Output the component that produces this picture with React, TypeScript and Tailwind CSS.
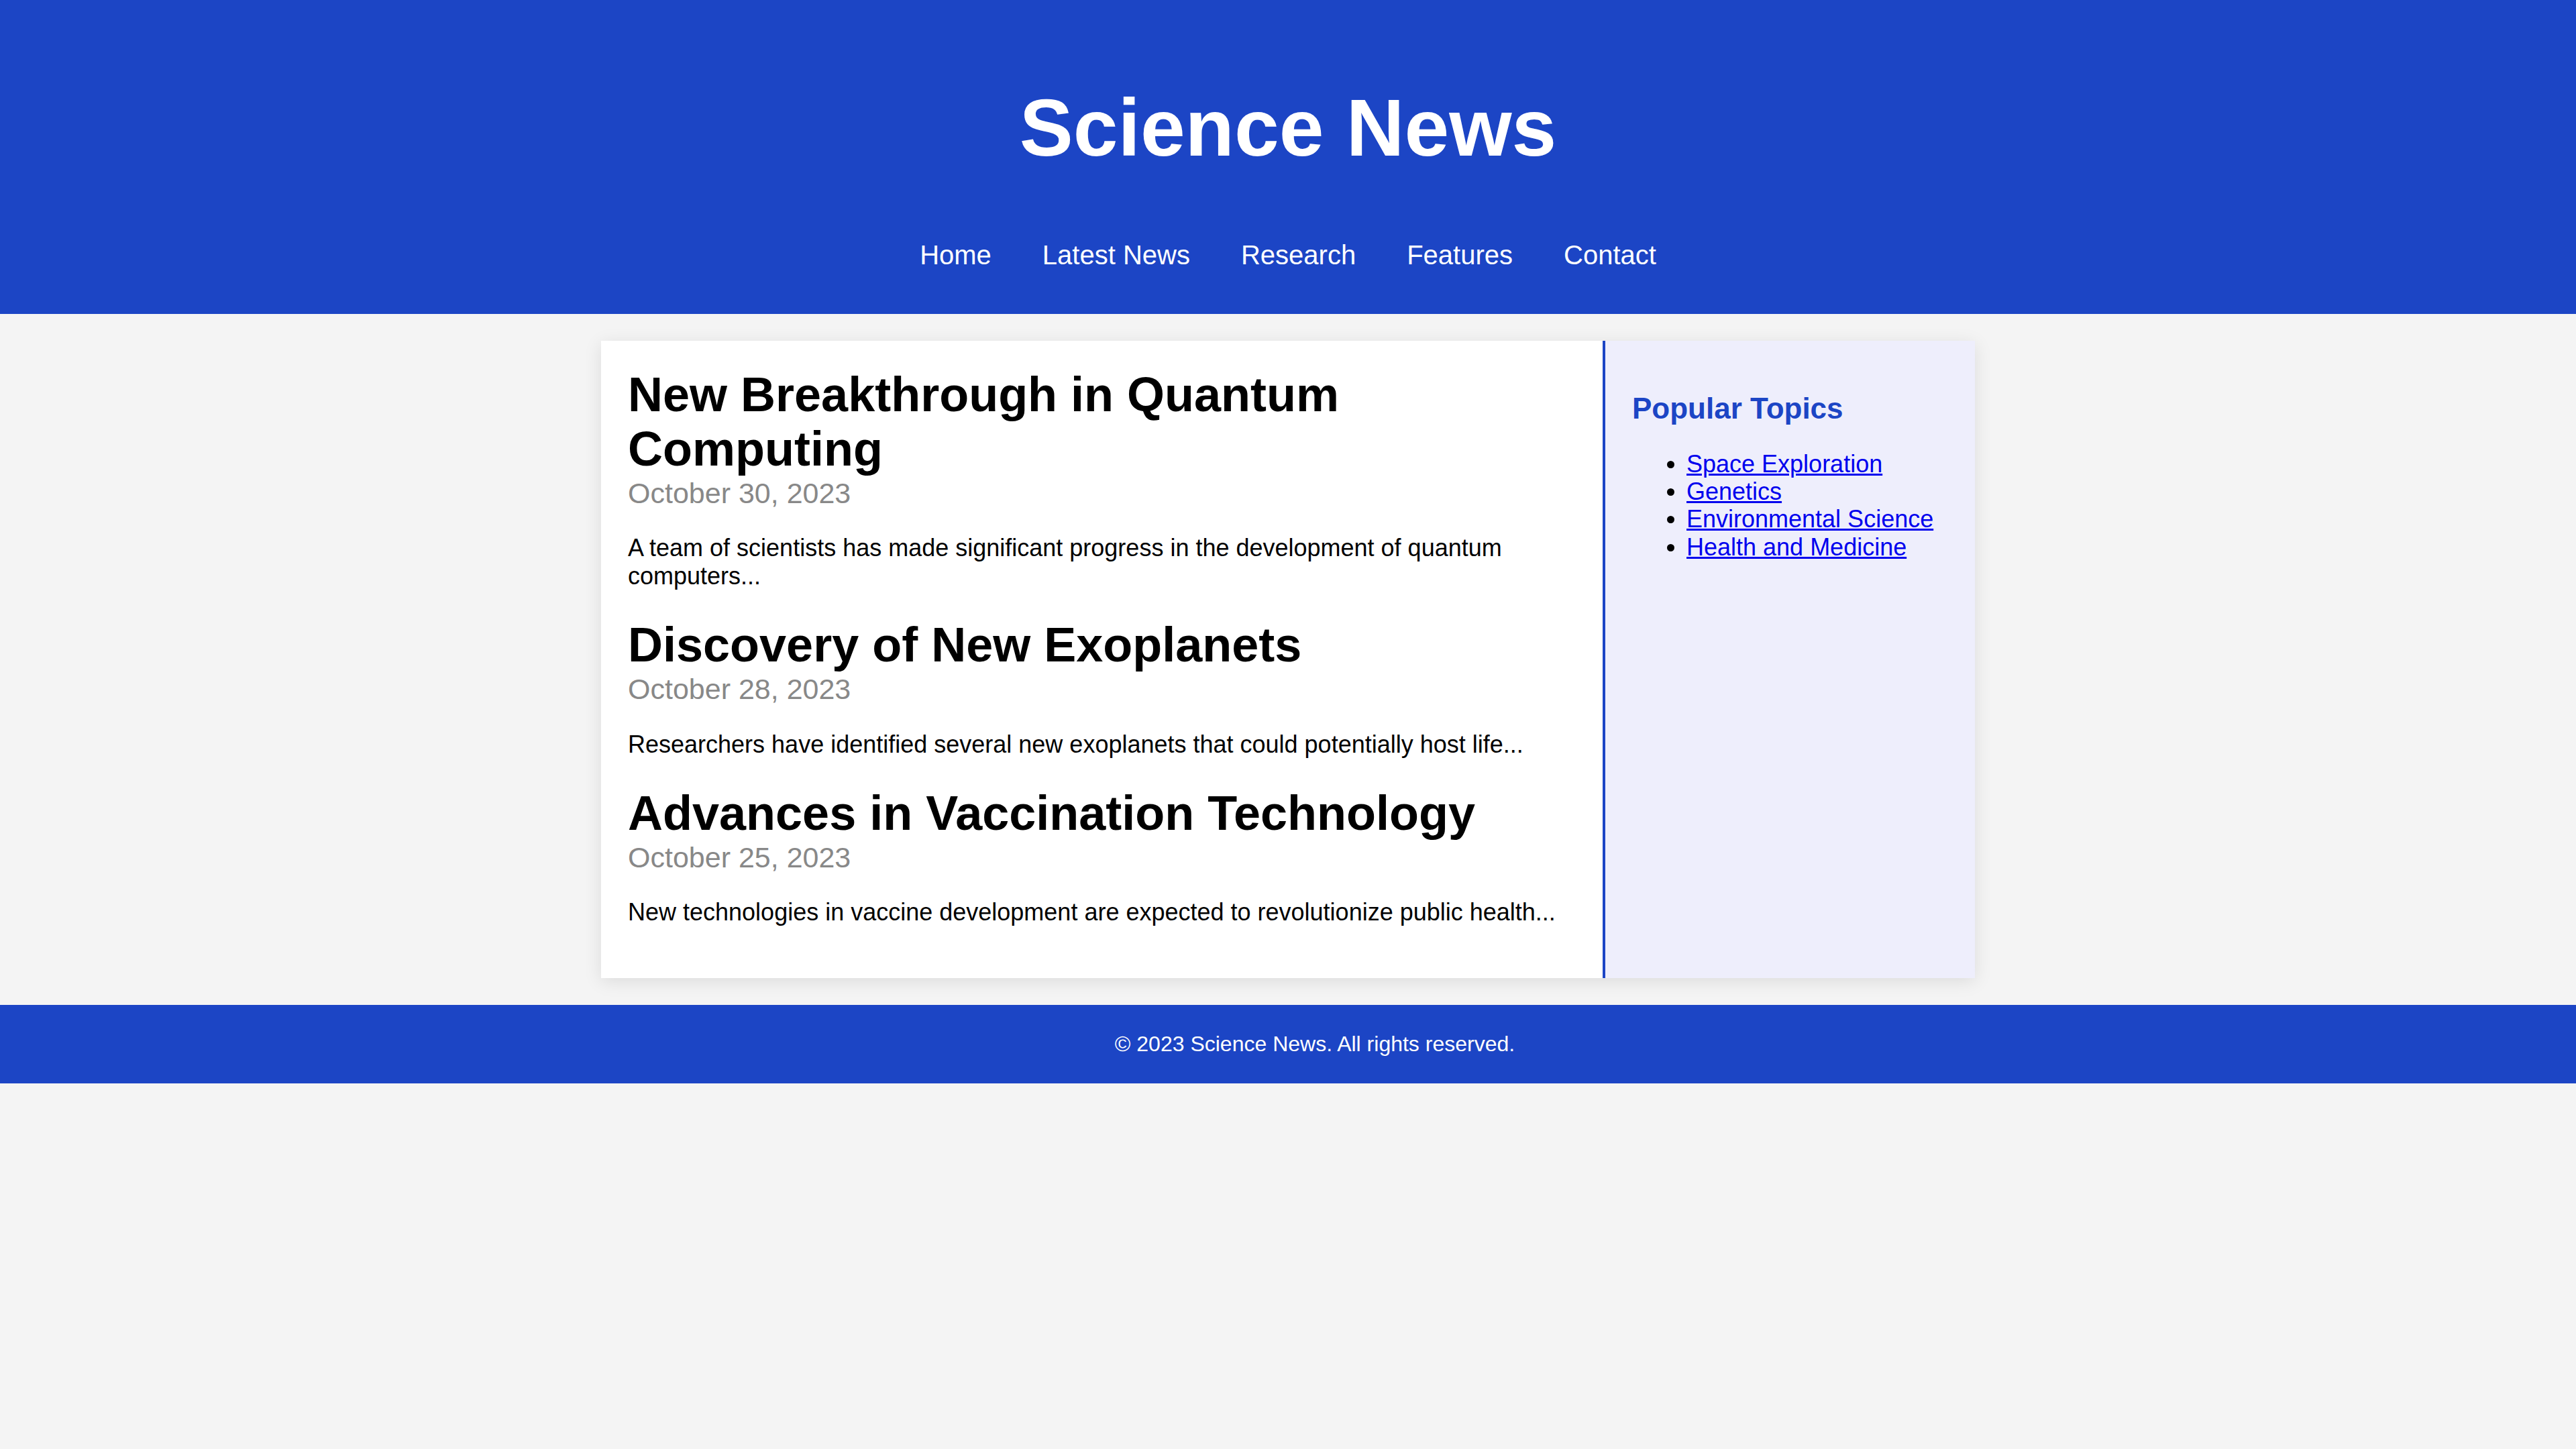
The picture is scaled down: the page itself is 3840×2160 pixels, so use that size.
const navItems = ["Home", "Latest News", "Research", "Features", "Contact"];

const articles = [
  {
    title: "New Breakthrough in Quantum Computing",
    date: "October 30, 2023",
    text: "A team of scientists has made significant progress in the development of quantum computers...",
  },
  {
    title: "Discovery of New Exoplanets",
    date: "October 28, 2023",
    text: "Researchers have identified several new exoplanets that could potentially host life...",
  },
  {
    title: "Advances in Vaccination Technology",
    date: "October 25, 2023",
    text: "New technologies in vaccine development are expected to revolutionize public health...",
  },
];

const topics = ["Space Exploration", "Genetics", "Environmental Science", "Health and Medicine"];

const App = () => {
  return (
    <div className="min-h-screen bg-[#f4f4f4] font-['Liberation_Sans',Arial,sans-serif] text-black">
      <header className="bg-[#1c45c5] text-white text-center pt-[40px] pb-[65px]">
        <h1 className="mt-[81px] text-[120px] leading-[138px] font-bold">Science News</h1>
        <nav className="mt-[98px] flex justify-center gap-[76px] text-[40px] leading-[46px]">
          {navItems.map((item) => (
            <a key={item} href="#" className="text-white">
              {item}
            </a>
          ))}
        </nav>
      </header>

      <main className="mt-[40px] w-[2048px] mx-auto flex bg-white shadow-[0_5px_25px_rgba(0,0,0,0.1)]">
        <section className="flex-1 px-[40px] pt-[40px] pb-[41px] flex flex-col gap-[6px]">
          {articles.map((a) => (
            <article key={a.title}>
              <h2 className="text-[72px] leading-[81px] font-bold">{a.title}</h2>
              <div className="mt-[1px] text-[43px] leading-[1.15] text-[#888888]">{a.date}</div>
              <p className="my-[36px] text-[36px] leading-[1.15]">{a.text}</p>
            </article>
          ))}
        </section>
        <aside className="w-[555px] border-l-4 border-[#1c45c5] bg-[#eeeefc] p-[40px]">
          <h3 className="mt-[36px] text-[44px] leading-[1.15] font-bold text-[#1c45c5]">Popular Topics</h3>
          <ul className="mt-[36px] pl-[81px] list-disc text-[36px] leading-[1.15]">
            {topics.map((t) => (
              <li key={t}>
                <a href="#" className="text-[#0000ee] underline">
                  {t}
                </a>
              </li>
            ))}
          </ul>
        </aside>
      </main>

      <footer className="mt-[40px] bg-[#1c45c5] text-white text-center py-[40px] pl-[80px] text-[32px] leading-[1.15]">
        <p>© 2023 Science News. All rights reserved.</p>
      </footer>
    </div>
  );
};

export default App;
